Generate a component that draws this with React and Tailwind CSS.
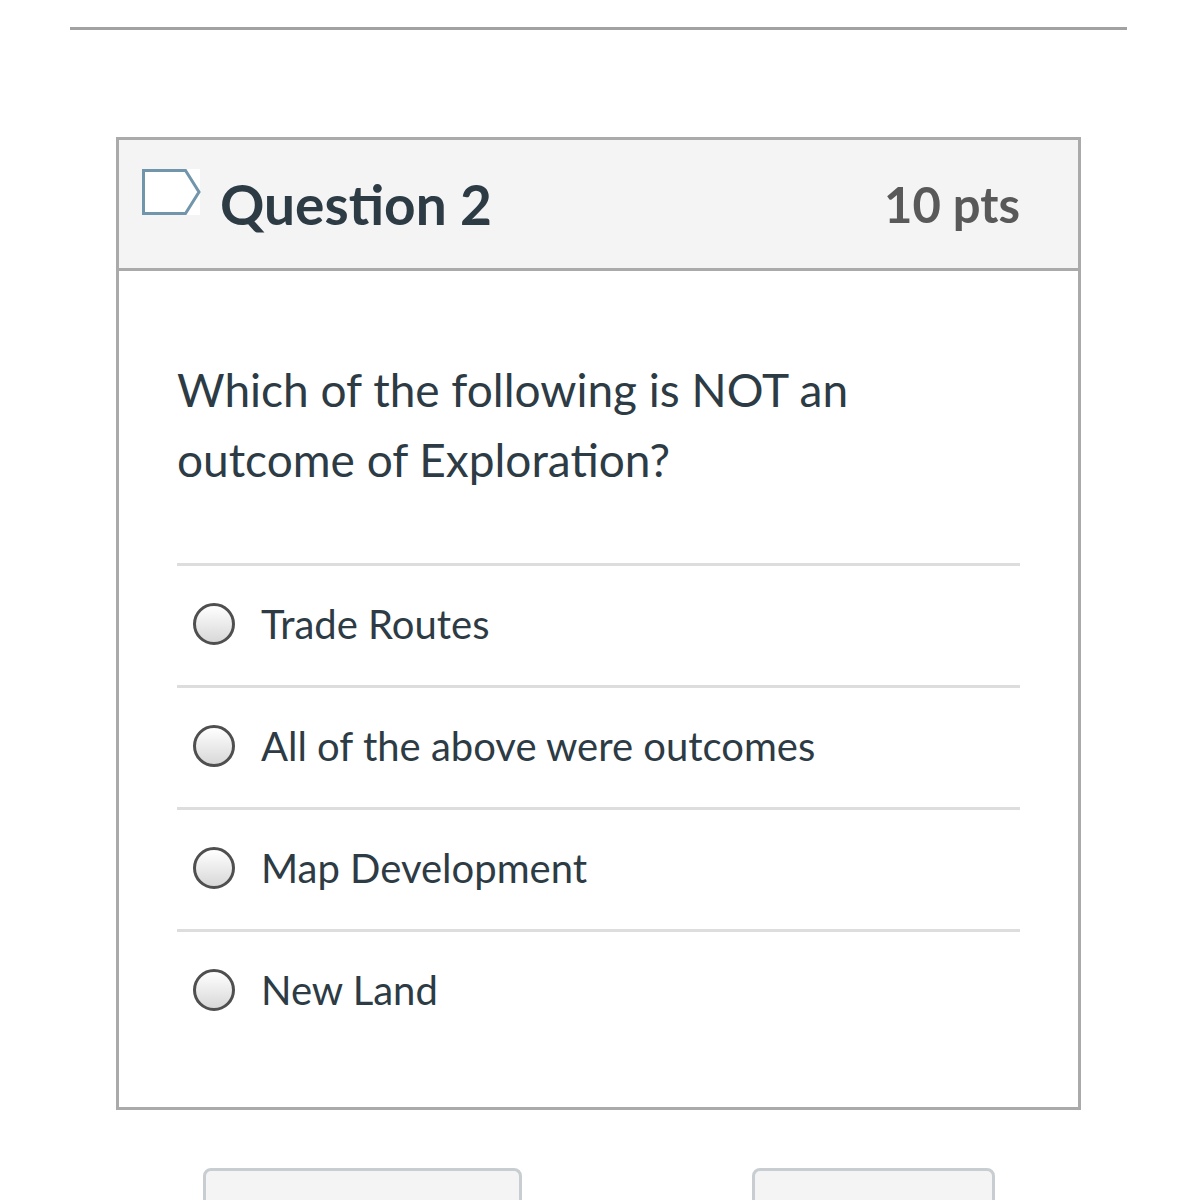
import React, { useState } from 'react';

const answers = ['Trade Routes', 'All of the above were outcomes', 'Map Development', 'New Land'];

const Answer = ({ id, label, checked, onSelect }) => (
  <div className="border-t-3 border-[#dddddd] h-[122px] flex items-center pl-4 pb-1">
    <input
      type="radio"
      id={id}
      name="question_2"
      checked={checked}
      onChange={onSelect}
      className="appearance-none shrink-0 w-[42px] h-[42px] rounded-full border-3 border-[#4f4f4f] bg-gradient-to-b from-white to-[#d8d8d8] checked:to-[#888888]"
    />
    <label htmlFor={id} className="pl-[26px] text-[40px] leading-[60px]">{label}</label>
  </div>
);

const App = () => {
  const [selected, setSelected] = useState(null);

  return (
    <div className="h-screen overflow-hidden bg-white text-[#2d3b45] font-[Lato,sans-serif] pl-[70px] pr-[71px] pt-[27px]">
      <hr className="border-t-3 border-[#a2a2a2]" />
      <main className="px-[46px] pt-[107px]">
        <section className="border-3 border-[#aaaaaa]">
          <header className="flex items-center justify-between bg-[#f4f4f4] border-b-3 border-[#aaaaaa] h-[131px] pl-[22px] pr-[58px]">
            <div className="flex items-start">
              <button aria-label="Flag question">
                <svg viewBox="0 0 60 46" className="w-[60px] h-[46px]" fill="white">
                  <path d="M1 0H59V46H1Z" />
                  <path d="M2.5 1.5H44.5L58 23L44.5 44.5H2.5Z" stroke="#7195ab" strokeWidth="3" />
                </svg>
              </button>
              <h2 className="pl-[19px] text-[55px] leading-[70px] font-bold">Question 2</h2>
            </div>
            <span className="text-[49px] leading-[60px] font-bold text-[#595959]">10 pts</span>
          </header>
          <div className="px-[58px] pt-[84px] pb-[56px]">
            <p className="text-[46px] leading-[70px] pb-[68px]">
              Which of the following is NOT an outcome of Exploration?
            </p>
            <fieldset>
              {answers.map((label, i) => (
                <Answer
                  key={label}
                  id={`answer_${i}`}
                  label={label}
                  checked={selected === i}
                  onSelect={() => setSelected(i)}
                />
              ))}
            </fieldset>
          </div>
        </section>
        <nav className="flex justify-between pt-[58px] pl-[87px] pr-[86px]">
          <button aria-label="Previous" className="w-[319px] h-[110px] rounded-lg border-3 border-[#c7cdd1] bg-[#f4f4f4]" />
          <button aria-label="Next" className="w-[243px] h-[110px] rounded-lg border-3 border-[#c7cdd1] bg-[#f4f4f4]" />
        </nav>
      </main>
    </div>
  );
};

export default App;
